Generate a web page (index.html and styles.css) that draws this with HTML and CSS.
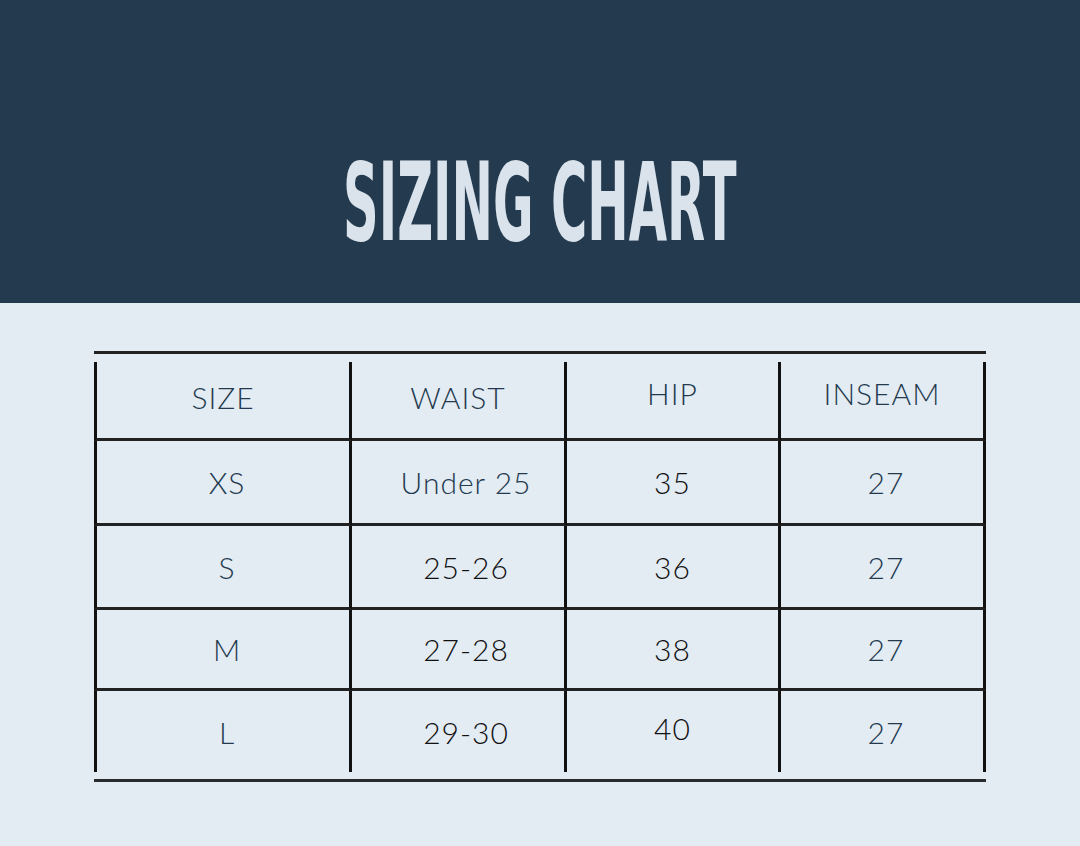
FILE: index.html
```html
<!DOCTYPE html>
<html lang="en">
<head>
<meta charset="utf-8">
<title>Sizing Chart</title>
<link rel="stylesheet" href="styles.css">
</head>
<body>
<header class="banner">
  <h1 class="title"><span class="title-text">SIZING CHART</span></h1>
</header>
<main class="sheet">
  <div class="chart">
    <div class="grid">
      <div class="cell c1 head">SIZE</div>
      <div class="cell c2 head">WAIST</div>
      <div class="cell c3 head up">HIP</div>
      <div class="cell c4 head up">INSEAM</div>

      <div class="cell c1 r2">XS</div>
      <div class="cell c2 r2">Under 25</div>
      <div class="cell c3 r2 ink">35</div>
      <div class="cell c4 r2">27</div>

      <div class="cell c1 r3">S</div>
      <div class="cell c2 r3 ink">25-26</div>
      <div class="cell c3 r3 ink">36</div>
      <div class="cell c4 r3">27</div>

      <div class="cell c1 r4">M</div>
      <div class="cell c2 r4 ink">27-28</div>
      <div class="cell c3 r4 ink">38</div>
      <div class="cell c4 r4">27</div>

      <div class="cell c1 r5 last">L</div>
      <div class="cell c2 r5 last ink">29-30</div>
      <div class="cell c3 r5 last ink up">40</div>
      <div class="cell c4 r5 last">27</div>
    </div>
  </div>
</main>
</body>
</html>
```
FILE: styles.css
```css
* { box-sizing: border-box; }

html, body {
  margin: 0;
  padding: 0;
}

body {
  width: 1080px;
  height: 846px;
  background: #e3ebf3;
  font-family: Lato, "Noto Sans", "Liberation Sans", sans-serif;
  color: #22394e;
  overflow: hidden;
}

.banner {
  height: 303px;
  background: #233a4f;
  display: flex;
  align-items: center;
  justify-content: center;
  padding-top: 102px;
}

.title {
  margin: 0;
  font-family: "DejaVu Sans Condensed", "DejaVu Sans", sans-serif;
  font-weight: bold;
  font-size: 108px;
  line-height: 1;
  color: #dae3eb;
}

.title-text {
  display: inline-block;
  transform: scaleX(0.51);
  white-space: nowrap;
}

.sheet {
  padding-top: 48px;
  padding-left: 94px;
}

.chart {
  width: 892px;
  border-top: 3px solid #222;
  border-bottom: 3px solid #2a2a2a;
  padding: 8px 0 7px;
}

.grid {
  display: grid;
  grid-template-columns: 258px 215px 214px 205px;
  grid-template-rows: 79px 85px 84px 81px 81px;
}

.cell {
  display: flex;
  align-items: center;
  justify-content: center;
  font-size: 30px;
  font-weight: 300;
  letter-spacing: 1px;
  border-right: 3px solid #111;
  border-bottom: 3px solid #222;
}

.cell.last { border-bottom: 0; }

.c1 { border-left: 3px solid #111; }

.head { padding-bottom: 7px; }
.head.up { padding-bottom: 14px; }
.r5.up { padding-bottom: 8px; }

.c1:not(.head) { padding-left: 8px; }
.c2:not(.head) { padding-left: 16px; }
.c4:not(.head) { padding-left: 8px; }

.ink { color: #111; }
```
